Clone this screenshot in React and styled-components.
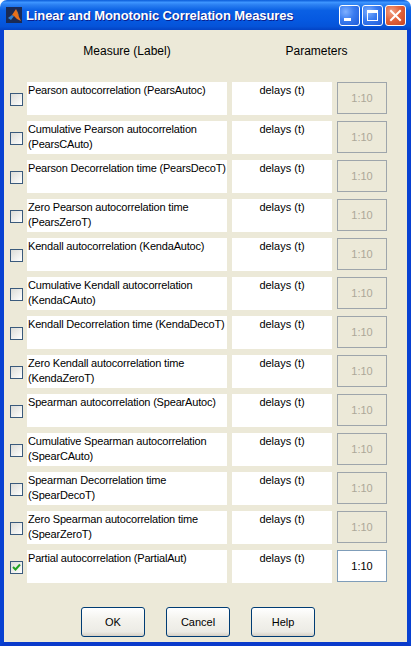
import React, { useState } from "react";
import styled, { createGlobalStyle } from "styled-components";

const GlobalStyle = createGlobalStyle`
  html, body {
    margin: 0;
    padding: 0;
    background: #ffffff;
  }
  * {
    box-sizing: border-box;
  }
`;

const Window = styled.div`
  width: 411px;
  height: 646px;
  display: flex;
  flex-direction: column;
  font-family: "Liberation Sans", Arial, sans-serif;
  font-size: 11px;
  color: #000;
`;

const TitleBar = styled.div`
  height: 30px;
  flex: 0 0 30px;
  display: flex;
  align-items: center;
  padding: 0 5px 0 6px;
  border-radius: 7px 7px 0 0;
  background: linear-gradient(
    to bottom,
    #0a5bd8 0%,
    #3d95ff 8%,
    #2b80f2 16%,
    #0a60e4 35%,
    #0558e0 70%,
    #0553d8 88%,
    #0343c4 100%
  );
`;

const TitleIcon = styled.svg`
  width: 16px;
  height: 16px;
  flex: 0 0 16px;
`;

const TitleText = styled.div`
  margin-left: 4px;
  flex: 1;
  color: #ffffff;
  font-weight: bold;
  font-size: 13px;
  letter-spacing: -0.1px;
  text-shadow: 1px 1px 0 #0a1e8c;
  white-space: nowrap;
`;

const CaptionButton = styled.div`
  width: 21px;
  height: 21px;
  margin-left: 2px;
  border: 1px solid #ffffff;
  border-radius: 3px;
  display: flex;
  align-items: center;
  justify-content: center;
  background: ${(p) =>
    p.$close
      ? "radial-gradient(circle at 30% 30%, #f2a286 0%, #e2643c 45%, #c74422 100%)"
      : "radial-gradient(circle at 30% 30%, #7fb0ff 0%, #3a7cf0 45%, #1f5ad8 100%)"};
`;

const Frame = styled.div`
  flex: 1;
  display: flex;
  border-left: 4px solid #0841d2;
  border-right: 4px solid #0841d2;
  border-bottom: 4px solid #0a3acb;
`;

const Content = styled.div`
  flex: 1;
  background: #ece9d8;
  padding: 14px 0 0 5px;
  display: flex;
  flex-direction: column;
`;

const Grid = styled.div`
  display: grid;
  grid-template-columns: 13px 200px 100px 50px;
  column-gap: 5px;
  row-gap: 6px;
  grid-auto-rows: 33px;
  align-items: stretch;
`;

const HeaderRow = styled.div`
  display: grid;
  grid-template-columns: 13px 200px 155px;
  column-gap: 5px;
  height: 14px;
  line-height: 14px;
  font-size: 12px;
  margin-bottom: 24px;
`;

const HeaderCell = styled.div`
  grid-column: ${(p) => p.$col};
  text-align: center;
  padding-left: ${(p) => p.$indent || 0}px;
`;

const Check = styled.div`
  align-self: center;
  justify-self: end;
  margin-right: -1px;
  width: 13px;
  height: 13px;
  margin-top: 2px;
  border: 1px solid #3a5a7c;
  background: linear-gradient(135deg, #dcdcd7 0%, #f4f4f2 70%, #ffffff 100%);
  display: flex;
  align-items: center;
  justify-content: center;
  cursor: pointer;
`;

const LabelBox = styled.div`
  background: #ffffff;
  padding: 1px 0 0 1px;
  line-height: 15px;
  font-size: 11px;
  letter-spacing: -0.18px;
  overflow: hidden;
  white-space: nowrap;
`;

const ParamBox = styled.div`
  background: #ffffff;
  text-align: center;
  padding-top: 1px;
  line-height: 15px;
  font-size: 11px;
`;

const Edit = styled.div`
  border: 1px solid ${(p) => (p.$enabled ? "#7f9db9" : "#9ea5ab")};
  background: ${(p) => (p.$enabled ? "#ffffff" : "#ece9d8")};
  color: ${(p) => (p.$enabled ? "#000000" : "#aca899")};
  display: flex;
  align-items: center;
  justify-content: center;
  font-size: 11px;
  height: 32px;
`;

const ButtonRow = styled.div`
  display: flex;
  gap: 21px;
  margin-top: 24px;
  padding-left: 72px;
`;

const Button = styled.div`
  width: 64px;
  height: 30px;
  border: 1px solid #003c74;
  border-radius: 3px;
  background: linear-gradient(to bottom, #ffffff 0%, #f4f3ee 40%, #ecebe5 85%, #d6d0c5 100%);
  display: flex;
  align-items: center;
  justify-content: center;
  font-size: 11px;
  cursor: pointer;
`;

const measures = [
  ["Pearson autocorrelation (PearsAutoc)"],
  ["Cumulative Pearson autocorrelation", "(PearsCAuto)"],
  ["Pearson Decorrelation time (PearsDecoT)"],
  ["Zero Pearson autocorrelation time", "(PearsZeroT)"],
  ["Kendall autocorrelation (KendaAutoc)"],
  ["Cumulative Kendall autocorrelation", "(KendaCAuto)"],
  ["Kendall Decorrelation time (KendaDecoT)"],
  ["Zero Kendall autocorrelation time", "(KendaZeroT)"],
  ["Spearman autocorrelation (SpearAutoc)"],
  ["Cumulative Spearman autocorrelation", "(SpearCAuto)"],
  ["Spearman Decorrelation time", "(SpearDecoT)"],
  ["Zero Spearman autocorrelation time", "(SpearZeroT)"],
  ["Partial autocorrelation (PartialAut)"],
];

function MatlabIcon() {
  return (
    <TitleIcon viewBox="0 0 16 16">
      <rect x="0" y="0" width="16" height="16" fill="#1a2a55" />
      <polygon points="2,11 6,8 8,9 5,13" fill="#2f7fd0" />
      <polygon points="6,8 10,2 13,10 15,14 11,12 8,9" fill="#e8701a" />
      <polygon points="10,2 12,6 13,10" fill="#f6b040" />
    </TitleIcon>
  );
}

function App() {
  const [checked, setChecked] = useState(measures.map((_, i) => i === 12));

  const toggle = (i) => {
    const next = [...checked];
    next[i] = !next[i];
    setChecked(next);
  };

  return (
    <>
      <GlobalStyle />
      <Window>
        <TitleBar>
          <MatlabIcon />
          <TitleText>Linear and Monotonic Correlation Measures</TitleText>
          <CaptionButton>
            <svg width="19" height="19" viewBox="0 0 19 19">
              <rect x="4" y="12" width="7" height="3" fill="#fff" />
            </svg>
          </CaptionButton>
          <CaptionButton>
            <svg width="19" height="19" viewBox="0 0 19 19">
              <rect x="4.5" y="4.5" width="10" height="10" fill="none" stroke="#fff" strokeWidth="1" />
              <rect x="4" y="4" width="11" height="3" fill="#fff" />
            </svg>
          </CaptionButton>
          <CaptionButton $close>
            <svg width="19" height="19" viewBox="0 0 19 19">
              <path d="M5 5 L14 14 M14 5 L5 14" stroke="#fff" strokeWidth="2" strokeLinecap="square" />
            </svg>
          </CaptionButton>
        </TitleBar>
        <Frame>
          <Content>
            <HeaderRow>
              <HeaderCell $col="2">Measure (Label)</HeaderCell>
              <HeaderCell $col="3" $indent={14}>Parameters</HeaderCell>
            </HeaderRow>
            <Grid>
              {measures.map((lines, i) => (
                <React.Fragment key={i}>
                  <Check onClick={() => toggle(i)}>
                    {checked[i] && (
                      <svg width="9" height="9" viewBox="0 0 9 9">
                        <path d="M1 4 L3.5 6.5 L8 1.5" fill="none" stroke="#21a121" strokeWidth="2" />
                      </svg>
                    )}
                  </Check>
                  <LabelBox>
                    {lines.map((l, j) => (
                      <div key={j}>{l}</div>
                    ))}
                  </LabelBox>
                  <ParamBox>delays (t)</ParamBox>
                  <Edit $enabled={checked[i]}>1:10</Edit>
                </React.Fragment>
              ))}
            </Grid>
            <ButtonRow>
              <Button>OK</Button>
              <Button>Cancel</Button>
              <Button>Help</Button>
            </ButtonRow>
          </Content>
        </Frame>
      </Window>
    </>
  );
}

export default App;
